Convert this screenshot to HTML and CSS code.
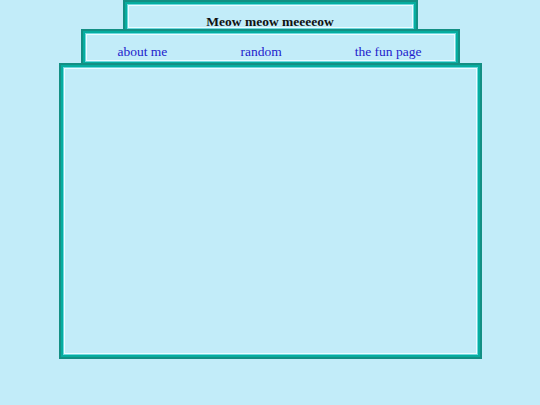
FILE: index.html
```html
<!DOCTYPE html>
<html>
<head>
<meta charset="utf-8">
<link rel="stylesheet" href="styles.css">
</head>
<body>
<div class="page">
  <div class="box title">Meow meow meeeeow</div>
  <nav class="box nav">
    <a href="#">about me</a>
    <a href="#">random</a>
    <a href="#">the fun page</a>
  </nav>
  <main class="box main"></main>
</div>
</body>
</html>
```
FILE: styles.css
```css
html, body {
  margin: 0;
  padding: 0;
  background: #c2ecf9;
}
.page {
  display: flex;
  flex-direction: column;
  align-items: center;
  font-family: "Liberation Serif", "Times New Roman", serif;
  font-size: 13.5px;
}
.box {
  box-sizing: border-box;
  background: #c2ecf9;
  border: 2px solid #138f84;
  box-shadow: inset 0 0 0 2px #06ad9f, inset 0 0 0 3px #6fd8df, inset 0 0 0 4px #ecfcff;
}
.title {
  width: 295px;
  height: 33px;
  padding-top: 12px;
  text-align: center;
  font-weight: bold;
  color: #111;
  line-height: 16px;
  position: relative;
  z-index: 1;
}
.nav {
  width: 379px;
  height: 37px;
  margin-top: -4px;
  padding: 13px 36px 0 35px;
  display: flex;
  justify-content: space-between;
  line-height: 16px;
  position: relative;
  z-index: 2;
}
.nav a {
  color: #2222cc;
  text-decoration: none;
}
.main {
  width: 423px;
  height: 296px;
  margin-top: -3px;
  position: relative;
  z-index: 3;
}
```
